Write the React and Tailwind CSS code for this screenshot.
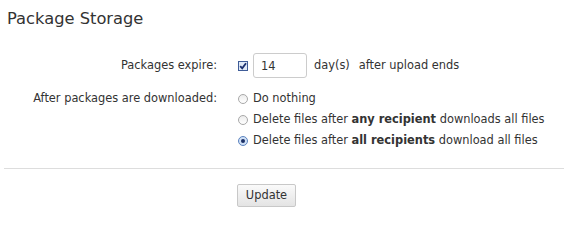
import React, { useState } from "react";

const CheckMark = () => (
    <svg viewBox="0 0 10 10" className="w-[10px] h-[10px]">
        <rect x="0.5" y="0.5" width="9" height="9" fill="#dfe9f7" stroke="#3f5c98" />
        <path d="M2.2 5.2 L4.2 7.4 L8 2.2" fill="none" stroke="#1a2f6e" strokeWidth="1.8" />
    </svg>
);

const Radio = ({ checked }) =>
    checked ? (
        <span className="w-[10px] h-[10px] rounded-full border border-[#5d84c0] bg-[#cfe0f6] flex items-center justify-center shrink-0">
            <span className="w-[4px] h-[4px] rounded-full bg-[#1b2f66]" />
        </span>
    ) : (
        <span className="w-[10px] h-[10px] rounded-full border border-[#a8a8a8] bg-gradient-to-b from-[#ececec] to-white shrink-0" />
    );

const App = () => {
    const [days, setDays] = useState("14");

    return (
        <div className="w-[564px] h-[217px] bg-white text-[#333] font-['DejaVu_Sans',Verdana,sans-serif] text-[11.4px]">
            {/* Heading */}
            <h1 className="text-[16.3px] leading-[20px] pt-[9px] pl-[7px] text-[#333]">Package Storage</h1>

            {/* Settings form */}
            <div className="grid grid-cols-[217px_1fr] gap-x-[21px] mt-[24px]">
                <div className="text-right leading-[25px]">Packages expire:</div>
                <div className="flex items-center">
                    <CheckMark />
                    <input
                        value={days}
                        onChange={(e) => setDays(e.target.value)}
                        className="ml-[5px] w-[54px] h-[25px] border border-[#ccc] rounded-[3px] px-[7px] text-[11.4px] text-[#333] outline-none"
                    />
                    <span className="ml-[7px]">day(s)</span>
                    <span className="ml-[9px]">after upload ends</span>
                </div>

                <div className="text-right mt-[10px] leading-[21px]">After packages are downloaded:</div>
                <div className="mt-[10px] flex flex-col">
                    <label className="flex items-center gap-[5px] h-[21px]">
                        <Radio /> Do nothing
                    </label>
                    <label className="flex items-center gap-[5px] h-[21px]">
                        <Radio /> <span>Delete files after <b>any recipient</b> downloads all files</span>
                    </label>
                    <label className="flex items-center gap-[5px] h-[21px]">
                        <Radio checked /> <span>Delete files after <b>all recipients</b> download all files</span>
                    </label>
                </div>
            </div>

            {/* Divider */}
            <div className="ml-[4px] mt-[17px] border-t border-[#ddd]" />

            {/* Footer */}
            <div className="pl-[237px] pt-[15px]">
                <button className="w-[59px] h-[23px] border border-[#c8c8c8] rounded-[2px] bg-gradient-to-b from-[#fafafa] to-[#e4e4e4] text-[11.4px] text-[#333]">
                    Update
                </button>
            </div>
        </div>
    );
};

export default App;
